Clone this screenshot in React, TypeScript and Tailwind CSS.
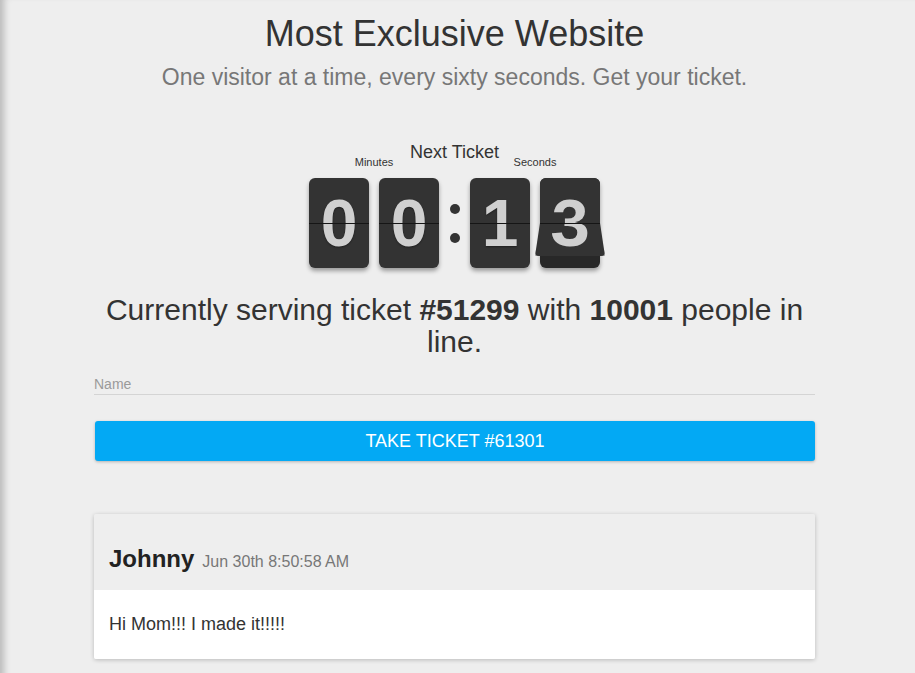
const font = { fontFamily: '"Liberation Sans", Arial, sans-serif' };

const Card = ({ digit }: { digit: string }) => (
  <div className="relative w-[60px] h-[90px] rounded-[6px] bg-[#333] shadow-[0_3px_4px_rgba(0,0,0,0.35)] flex items-center justify-center">
    <span className="text-[66px] font-bold leading-none text-[#cfcfcf] [text-shadow:0_1px_2px_rgba(0,0,0,0.4)]">{digit}</span>
    <div className="absolute left-0 right-0 top-[45px] h-px bg-[#151515]" />
  </div>
);

const FlipCard = ({ digit }: { digit: string }) => (
  <div className="relative w-[60px] h-[90px] rounded-[6px] bg-[#282828] shadow-[0_3px_4px_rgba(0,0,0,0.35)]">
    <div className="absolute inset-x-0 top-0 h-[45px] rounded-t-[6px] bg-[#333] overflow-hidden">
      <span className="absolute inset-x-0 top-[12px] text-center text-[66px] font-bold leading-none text-[#cfcfcf]">{digit}</span>
    </div>
    <div className="absolute left-[-5px] right-[-5px] top-[45px] h-[33px] overflow-hidden rounded-b-[4px] bg-[#333] [clip-path:polygon(5px_0,65px_0,70px_100%,0_100%)] shadow-[0_2px_3px_rgba(0,0,0,0.5)]">
      <div className="absolute inset-x-0 top-[-33px] text-center text-[66px] font-bold leading-none text-[#cfcfcf] scale-x-[1.08]">{digit}</div>
    </div>
    <div className="absolute left-0 right-0 top-[45px] h-px bg-[#151515]" />
  </div>
);

export default function App() {
  return (
    <div style={font} className="min-h-screen bg-[#eeeeee] shadow-[inset_9px_0_7px_-5px_rgba(0,0,0,0.22)] pr-[6px] pb-10">
      <div className="w-[721px] mx-auto flex flex-col items-center">
        <h1 className="pt-[14px] text-[36px] leading-[40px] text-[#333]">Most Exclusive Website</h1>
        <p className="mt-[9px] text-[23px] leading-[28px] text-[#777]">One visitor at a time, every sixty seconds. Get your ticket.</p>

        <div className="mt-[51px] text-[18px] leading-[20px] text-[#333]">Next Ticket</div>
        <div className="-mt-[6px] flex w-[291px] text-[11px] leading-[12px] text-[#333]">
          <div className="w-[130px] text-center">Minutes</div>
          <div className="w-[31px]" />
          <div className="w-[130px] text-center">Seconds</div>
        </div>
        <div className="mt-[10px] flex w-[291px]">
          <div className="flex gap-[10px]">
            <Card digit="0" />
            <Card digit="0" />
          </div>
          <div className="w-[31px] flex flex-col items-center justify-center gap-[19px]">
            <div className="w-[10px] h-[10px] rounded-full bg-[#333]" />
            <div className="w-[10px] h-[10px] rounded-full bg-[#333]" />
          </div>
          <div className="flex gap-[10px]">
            <Card digit="1" />
            <FlipCard digit="3" />
          </div>
        </div>

        <p className="mt-[26px] text-[30px] leading-[32px] text-[#333] text-center">
          Currently serving ticket <b>#51299</b> with <b>10001</b> people in line.
        </p>

        <input
          placeholder="Name"
          className="mt-[15px] w-full h-[22px] border-b border-[#d4d4d4] bg-transparent text-[14px] text-[#333] placeholder:text-[#9a9a9a] outline-none"
        />

        <button className="mt-[26px] ml-[1px] w-[720px] h-[40px] rounded-[3px] bg-[#03a9f4] text-white text-[18px] shadow-[0_1px_3px_rgba(0,0,0,0.25)]">
          TAKE TICKET #61301
        </button>

        <div className="mt-[53px] w-full rounded-[2px] overflow-hidden shadow-[0_1px_4px_rgba(0,0,0,0.22)]">
          <div className="h-[76px] bg-[#eeeeee] px-[15px] pb-[12px] flex items-end">
            <div className="leading-[32px]">
              <span className="text-[24px] font-bold text-[#222]">Johnny</span>
              <span className="ml-[8px] text-[16px] text-[#777]">Jun 30th 8:50:58 AM</span>
            </div>
          </div>
          <div className="bg-white px-[15px] pt-[22px] pb-[23px] text-[18px] leading-[24px] text-[#333]">Hi Mom!!! I made it!!!!!</div>
        </div>
      </div>
    </div>
  );
}
